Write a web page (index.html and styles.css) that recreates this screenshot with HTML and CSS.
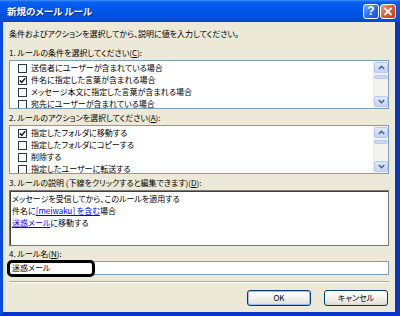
FILE: index.html
```html
<!DOCTYPE html>
<html lang="ja">
<head>
<meta charset="utf-8">
<title>新規のメール ルール</title>
<link rel="stylesheet" href="styles.css">
</head>
<body>
<div class="window">
  <div class="titlebar">
    <span class="title">新規のメール ルール</span>
    <div class="tb-buttons">
      <span class="tb-btn help">?</span>
      <span class="tb-btn close"><svg width="10" height="9" viewBox="0 0 10 9"><path d="M1.5 1 L8.5 8 M8.5 1 L1.5 8" stroke="#fff" stroke-width="1.8" fill="none"/></svg></span>
    </div>
  </div>
  <div class="frame">
    <div class="content">
      <p class="intro">条件およびアクションを選択してから、説明に値を入力してください。</p>
      <p class="label first">1. ルールの条件を選択してください(<u>C</u>):</p>
      <div class="listbox">
        <ul class="items">
          <li><span class="cb"></span>送信者にユーザーが含まれている場合</li>
          <li><span class="cb"><svg width="7" height="7" viewBox="0 0 7 7"><path d="M0.8 3.4 L2.7 5.3 L6.2 1.2" stroke="#222" stroke-width="1.5" fill="none"/></svg></span>件名に指定した言葉が含まれる場合</li>
          <li><span class="cb"></span>メッセージ本文に指定した言葉が含まれる場合</li>
          <li><span class="cb"></span>宛先にユーザーが含まれている場合</li>
        </ul>
        <div class="scrollbar">
          <span class="sb-btn"><svg width="7" height="5" viewBox="0 0 7 5"><path d="M0.8 4 L3.5 1.3 L6.2 4" stroke="#4d6185" stroke-width="1.5" fill="none"/></svg></span>
          <span class="sb-thumb"></span>
          <span class="sb-space"></span>
          <span class="sb-btn"><svg width="7" height="5" viewBox="0 0 7 5"><path d="M0.8 1 L3.5 3.7 L6.2 1" stroke="#4d6185" stroke-width="1.5" fill="none"/></svg></span>
        </div>
      </div>
      <p class="label">2. ルールのアクションを選択してください(<u>A</u>):</p>
      <div class="listbox">
        <ul class="items">
          <li><span class="cb"><svg width="7" height="7" viewBox="0 0 7 7"><path d="M0.8 3.4 L2.7 5.3 L6.2 1.2" stroke="#222" stroke-width="1.5" fill="none"/></svg></span>指定したフォルダに移動する</li>
          <li><span class="cb"></span>指定したフォルダにコピーする</li>
          <li><span class="cb"></span>削除する</li>
          <li><span class="cb"></span>指定したユーザーに転送する</li>
        </ul>
        <div class="scrollbar">
          <span class="sb-btn"><svg width="7" height="5" viewBox="0 0 7 5"><path d="M0.8 4 L3.5 1.3 L6.2 4" stroke="#4d6185" stroke-width="1.5" fill="none"/></svg></span>
          <span class="sb-thumb"></span>
          <span class="sb-space"></span>
          <span class="sb-btn"><svg width="7" height="5" viewBox="0 0 7 5"><path d="M0.8 1 L3.5 3.7 L6.2 1" stroke="#4d6185" stroke-width="1.5" fill="none"/></svg></span>
        </div>
      </div>
      <p class="label">3. ルールの説明 (下線をクリックすると編集できます)(<u>D</u>):</p>
      <div class="desc">
        <div>メッセージを受信してから、このルールを適用する</div>
        <div>件名に<a class="link">[meiwaku] を含む</a>場合</div>
        <div><a class="link">迷惑メール</a>に移動する</div>
      </div>
      <p class="label l4">4. ルール名(<u>N</u>):</p>
      <div class="name-wrap">
        <div class="name-input">迷惑メール</div>
        <span class="annot"></span>
      </div>
      <div class="sep"></div>
      <div class="buttons">
        <span class="btn default">OK</span>
        <span class="btn">キャンセル</span>
      </div>
    </div>
  </div>
</div>
</body>
</html>
```

FILE: styles.css
```css
html, body {
  margin: 0;
  padding: 0;
}
body {
  width: 400px;
  height: 316px;
  overflow: hidden;
  font-family: "Noto Sans CJK JP", "Noto Sans", sans-serif;
  font-size: 8px;
  font-feature-settings: "palt";
  color: #000;
}
.window {
  width: 400px;
  height: 316px;
  display: flex;
  flex-direction: column;
  background: #0842d6;
}
.titlebar {
  height: 22px;
  flex: none;
  display: flex;
  justify-content: space-between;
  align-items: flex-start;
  padding: 0 4px 0 7px;
  background: linear-gradient(#3d8ff8 0, #0a61ee 2px, #0058ee 7px, #0055e5 13px, #0050da 19px, #0047c8 22px);
}
.title {
  color: #fff;
  font-weight: bold;
  font-size: 9.5px;
  line-height: 22px;
  text-shadow: 1px 1px 0 #0b2a8a;
}
.tb-buttons {
  display: flex;
  gap: 1px;
  padding-top: 4px;
}
.tb-btn {
  width: 16px;
  height: 15px;
  box-sizing: border-box;
  border: 1px solid #fff;
  border-radius: 3px;
  display: flex;
  align-items: center;
  justify-content: center;
}
.help {
  background: linear-gradient(135deg, #7aa8fa, #2d69ea 55%, #1b4ccc);
  color: #fff;
  font-family: "Liberation Sans", sans-serif;
  font-weight: bold;
  font-size: 12px;
  line-height: 13px;
}
.close {
  background: linear-gradient(135deg, #f3a084, #e15a32 50%, #c43a16);
}
.frame {
  flex: 1;
  display: flex;
  border-left: 3px solid #0b4ae0;
  border-right: 5px solid #0735c8;
  border-bottom: 4px solid #0735c8;
}
.content {
  flex: 1;
  background: #ece9d8;
  padding: 6px 6px 0;
  display: flex;
  flex-direction: column;
}
.intro {
  margin: 0;
  line-height: 12px;
  height: 12px;
  white-space: nowrap;
}
.label {
  margin: 3px 0 1px;
  line-height: 12px;
  height: 12px;
  white-space: nowrap;
}
.label.first {
  margin-top: 7px;
}
.label.l4 {
  margin-top: 2px;
}
.listbox {
  height: 49px;
  box-sizing: border-box;
  border: 1px solid #7f9db9;
  background: #fff;
  display: flex;
  flex: none;
}
.items {
  flex: 1;
  list-style: none;
  margin: 0;
  padding: 1px 0 0 8px;
  overflow: hidden;
}
.items li {
  height: 12px;
  line-height: 12px;
  display: flex;
  align-items: center;
  gap: 4px;
  white-space: nowrap;
}
.cb {
  width: 9px;
  height: 9px;
  box-sizing: border-box;
  border: 1px solid #2a3a4a;
  background: #fff;
  flex: none;
  display: flex;
  align-items: center;
  justify-content: center;
}
.scrollbar {
  width: 15px;
  flex: none;
  box-sizing: border-box;
  padding: 1px 0;
  background: #f4f3ee;
  border-left: 1px solid #eeede5;
  display: flex;
  flex-direction: column;
}
.sb-btn {
  height: 11px;
  box-sizing: border-box;
  border: 1px solid #b5c9f2;
  border-radius: 2px;
  background: linear-gradient(#e0e9fd, #c2d4fa);
  display: flex;
  align-items: center;
  justify-content: center;
}
.sb-thumb {
  height: 4px;
  margin-top: 2px;
  box-sizing: border-box;
  border: 1px solid #b5c9f2;
  border-radius: 2px;
  background: #c9d8fb;
}
.sb-space {
  flex: 1;
}
.desc {
  height: 56px;
  flex: none;
  box-sizing: border-box;
  background: #fff;
  border: 1px solid #7a7a7a;
  box-shadow: inset 1px 1px 0 #404040;
  padding: 2px 0 0 2px;
  line-height: 12px;
  white-space: nowrap;
}
.link {
  color: #0000ff;
  text-decoration: underline;
}
.name-wrap {
  position: relative;
  flex: none;
}
.name-input {
  height: 14px;
  box-sizing: border-box;
  border: 1px solid #7f9db9;
  background: #fff;
  padding-left: 2px;
  line-height: 12px;
}
.annot {
  position: absolute;
  left: -2px;
  top: -1px;
  width: 88px;
  height: 17px;
  box-sizing: border-box;
  border: 3px solid #000;
  border-radius: 5px;
}
.sep {
  margin-top: 6px;
  border-top: 1px solid #aca899;
  border-bottom: 1px solid #fff;
  flex: none;
}
.buttons {
  display: flex;
  justify-content: flex-end;
  gap: 13px;
  margin-top: 7px;
  padding-right: 1px;
}
.btn {
  width: 64px;
  height: 16px;
  box-sizing: border-box;
  border: 1px solid #003c74;
  border-radius: 3px;
  background: linear-gradient(#ffffff, #f4f4f0 45%, #e6e5de 85%, #d8d3c8);
  display: flex;
  align-items: center;
  justify-content: center;
  line-height: 12px;
}
.btn.default {
  box-shadow: inset 0 0 0 1px #9cbbf0;
}
```
